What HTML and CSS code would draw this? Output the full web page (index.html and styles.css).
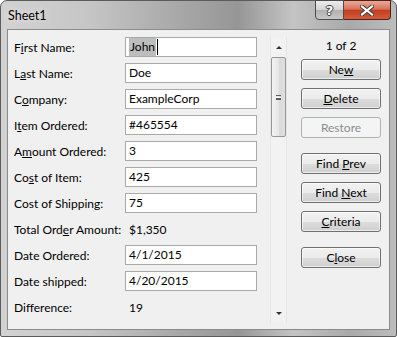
FILE: index.html
```html
<!DOCTYPE html>
<html lang="en">
<head>
    <meta charset="UTF-8">
    <title>Sheet1</title>
    <link rel="stylesheet" href="styles.css">
</head>
<body>
    <div class="window">
        <div class="titlebar">
            <span class="title">Sheet1</span>
            <div class="caption-btns">
                <div class="cap help"><span>?</span></div>
                <div class="cap close">
                    <svg width="14" height="11" viewBox="0 0 14 11">
                        <path d="M2 1.5 L12 9.5 M12 1.5 L2 9.5" stroke="#3a3a3a" stroke-width="4" stroke-linecap="square"/>
                        <path d="M2 1.5 L12 9.5 M12 1.5 L2 9.5" stroke="#fff" stroke-width="2.2" stroke-linecap="square"/>
                    </svg>
                </div>
            </div>
        </div>

        <div class="client">
            <div class="fields">
                <div class="row"><label>F<u>i</u>rst Name:</label><div class="field"><span class="sel">John</span><span class="caret"></span></div></div>
                <div class="row"><label>L<u>a</u>st Name:</label><div class="field">Doe</div></div>
                <div class="row"><label>C<u>o</u>mpany:</label><div class="field">ExampleCorp</div></div>
                <div class="row"><label>I<u>t</u>em Ordered:</label><div class="field">#465554</div></div>
                <div class="row"><label>A<u>m</u>ount Ordered:</label><div class="field">3</div></div>
                <div class="row"><label>Co<u>s</u>t of Item:</label><div class="field">425</div></div>
                <div class="row"><label>Cost of Shippin<u>g</u>:</label><div class="field">75</div></div>
                <div class="row"><label>Total Ord<u>e</u>r Amount:</label><div class="value">$1,350</div></div>
                <div class="row"><label>Date Ordered:</label><div class="field">4/1/2015</div></div>
                <div class="row"><label>Date shipped:</label><div class="field">4/20/2015</div></div>
                <div class="row"><label>Difference:</label><div class="value">19</div></div>
            </div>

            <div class="scrollbar">
                <div class="sb-arrow"><span class="tri up"></span></div>
                <div class="sb-thumb"><span class="grip"></span></div>
                <div class="sb-track"></div>
                <div class="sb-arrow"><span class="tri down"></span></div>
            </div>

            <div class="actions">
                <div class="counter">1 of 2</div>
                <button class="btn">Ne<u>w</u></button>
                <button class="btn"><u>D</u>elete</button>
                <button class="btn" disabled>Restore</button>
                <button class="btn group">Find <u>P</u>rev</button>
                <button class="btn">Find <u>N</u>ext</button>
                <button class="btn"><u>C</u>riteria</button>
                <button class="btn group">C<u>l</u>ose</button>
            </div>
        </div>
    </div>
</body>
</html>
```

FILE: styles.css
```css
* {
    box-sizing: border-box;
}

body {
    margin: 0;
    background: #fff;
    font-family: "Lato", "Open Sans", sans-serif;
    font-size: 12px;
    color: #000;
}

.window {
    width: 397px;
    height: 337px;
    border: 1px solid #5b5b5b;
    border-radius: 7px 7px 2px 2px;
    padding: 0 6px 6px;
    background: linear-gradient(to right, #d2d2d2 0%, #c6c6c6 22%, #a8a8a8 45%, #969696 60%, #c4c4c4 74%, #a9a9a9 88%, #bcbcbc 100%);
    display: flex;
    flex-direction: column;
}

/* title bar */
.titlebar {
    height: 28px;
    display: flex;
    align-items: flex-start;
}

.title {
    padding: 7px 0 0 1px;
    font-size: 12.5px;
    line-height: 16px;
    text-shadow: 0 0 6px rgba(255, 255, 255, 0.8);
}

.caption-btns {
    margin-left: auto;
    margin-top: -1px;
    margin-right: -1px;
    display: flex;
    height: 20px;
}

.cap {
    height: 20px;
    display: flex;
    align-items: center;
    justify-content: center;
}

.cap.help {
    width: 29px;
    border: 1px solid #4b4b4b;
    border-radius: 0 0 0 4px;
    background: linear-gradient(#ececec, #d4d4d4 48%, #b1b1b1 52%, #c8c8c8);
}

.cap.help span {
    font-family: "DejaVu Sans", sans-serif;
    font-weight: bold;
    font-size: 13px;
    color: #fff;
    text-shadow: 1px 0 #3c3c3c, -1px 0 #3c3c3c, 0 1px #3c3c3c, 0 -1px #3c3c3c;
}

.cap.close {
    width: 47px;
    border: 1px solid #4c2219;
    border-left: none;
    border-radius: 0 0 4px 0;
    background: linear-gradient(#eaa898, #d6735c 45%, #c33f20 52%, #d25b3d);
}

/* client area */
.client {
    flex: 1;
    background: #f0f0f0;
    border: 1px solid #8b8b8b;
    display: flex;
    align-items: flex-start;
    padding: 7px 8px 0 6px;
}

.fields {
    width: 243px;
    display: flex;
    flex-direction: column;
    gap: 6px;
}

.row {
    display: flex;
    align-items: center;
    height: 20px;
}

.row label {
    width: 111px;
    white-space: nowrap;
}

.field {
    width: 132px;
    height: 20px;
    border: 1px solid #a9a9a9;
    background: #fff;
    padding: 0 3px;
    line-height: 18px;
    display: flex;
}

.sel {
    background: #bdbdbd;
    padding: 0 1px;
}

.caret {
    width: 1px;
    height: 16px;
    margin: 1px 0 0 1px;
    background: #000;
}

.value {
    padding-left: 4px;
}

/* scrollbar */
.scrollbar {
    margin-left: 13px;
    width: 17px;
    height: 286px;
    display: flex;
    flex-direction: column;
    align-items: center;
    background: #f2f2f2;
    border-left: 1px solid #e6e6e6;
    border-right: 1px solid #e6e6e6;
}

.sb-arrow {
    height: 20px;
    width: 100%;
    display: flex;
    align-items: center;
    justify-content: center;
}

.tri {
    width: 0;
    height: 0;
    border-left: 3px solid transparent;
    border-right: 3px solid transparent;
}

.tri.up {
    border-bottom: 3px solid #303030;
}

.tri.down {
    border-top: 3px solid #303030;
}

.sb-thumb {
    width: 15px;
    height: 80px;
    border: 1px solid #979797;
    border-radius: 2px;
    background: linear-gradient(to right, #f3f3f3, #e6e6e6 50%, #d9d9d9 51%, #dfdfdf);
    display: flex;
    align-items: center;
    justify-content: center;
}

.grip {
    width: 5px;
    height: 5px;
    border-top: 1px solid #5c5c5c;
    border-bottom: 1px solid #5c5c5c;
    background: linear-gradient(#fff 0, #fff 1px, #5c5c5c 1px, #5c5c5c 2px, transparent 2px);
    background-position: 0 1px;
    background-repeat: no-repeat;
}

.sb-track {
    flex: 1;
}

/* buttons */
.actions {
    margin-left: 14px;
    width: 80px;
    display: flex;
    flex-direction: column;
    gap: 8px;
}

.counter {
    height: 18px;
    line-height: 18px;
    text-align: center;
    margin-bottom: -4px;
}

.btn {
    height: 21px;
    padding: 0;
    font: inherit;
    color: #000;
    border: 1px solid #707070;
    border-radius: 3px;
    background: linear-gradient(#f2f2f2, #ebebeb 50%, #dddddd 51%, #cfcfcf);
    box-shadow: inset 0 0 0 1px rgba(255, 255, 255, 0.6);
}

.btn:disabled {
    color: #8d8d8d;
    border-color: #adb2b5;
    background: #f4f4f4;
    box-shadow: none;
}

.btn.group {
    margin-top: 7px;
}
```
